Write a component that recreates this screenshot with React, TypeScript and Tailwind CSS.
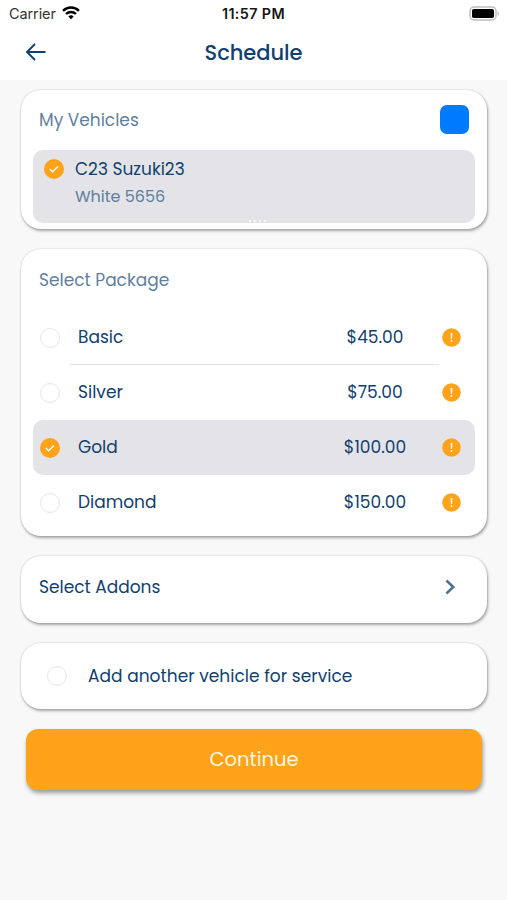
import { clsx } from "clsx";

const packages = [
  { name: "Basic", price: "$45.00" },
  { name: "Silver", price: "$75.00" },
  { name: "Gold", price: "$100.00", selected: true },
  { name: "Diamond", price: "$150.00" },
];

const cardClass =
  "rounded-[20px] bg-white shadow-[1px_2px_3px_rgba(0,0,0,0.32),0_0_2px_rgba(0,0,0,0.2)]";

function Radio({ checked = false }: { checked?: boolean }) {
  if (!checked) {
    return <span className="block size-5 shrink-0 rounded-full border-[1.5px] border-[#e4e6e8] bg-white" />;
  }
  return (
    <svg className="size-5 shrink-0" viewBox="0 0 20 20" fill="none">
      <circle cx="10" cy="10" r="10" fill="#ffa31a" />
      <path d="M5.8 10 8.6 12.7 14 7.6" stroke="white" strokeWidth="1.4" />
    </svg>
  );
}

function InfoIcon() {
  return (
    <svg className="size-[19px] shrink-0" viewBox="0 0 19 19">
      <circle cx="9.5" cy="9.5" r="9.3" fill="#ffa31a" />
      <path d="M8.6 5h1.8l-.3 6H8.9z" fill="white" />
      <circle cx="9.5" cy="13" r="0.9" fill="white" />
    </svg>
  );
}

function StatusBar() {
  return (
    <div className="grid h-7 grid-cols-3 items-center pr-[7px] pl-[9px] font-['Inter',sans-serif] text-[#151515]">
      <div className="flex items-center gap-1.5">
        <span className="text-[14.5px] leading-5 tracking-[-0.1px] text-[#333]">Carrier</span>
        <svg className="-mt-[2px] h-[14px] w-[18px]" viewBox="0 0 18 14" fill="none" stroke="black" strokeWidth="2.4">
          <path d="M1 4.8a11.5 11.5 0 0 1 16 0" />
          <path d="M4 8a7.2 7.2 0 0 1 10 0" />
          <path d="m9 13.3-2.7-2.8a4 4 0 0 1 5.4 0z" fill="black" stroke="none" />
        </svg>
      </div>
      <span className="mr-[2px] text-center text-[14.3px] leading-5 font-semibold tracking-[0.4px] whitespace-nowrap">
        11:57 PM
      </span>
      <svg className="-mt-[2px] h-[15px] w-[31px] justify-self-end" viewBox="0 0 31 15">
        <rect x="1" y="1" width="26" height="13" rx="4" fill="white" stroke="#bdbdbd" strokeWidth="1.5" />
        <rect x="3" y="3" width="22" height="9" rx="1.8" fill="black" />
        <path d="M28.5 5.2c2 .7 2 3.9 0 4.6z" fill="#bdbdbd" />
      </svg>
    </div>
  );
}

export default function App() {
  return (
    <div className="flex h-[900px] w-[507px] flex-col overflow-hidden bg-[#f8f8f8] font-['Poppins','Inter',sans-serif] text-[17px] text-[#12406d]">
      <header className="h-20 shrink-0 bg-white">
        <StatusBar />
        <div className="grid h-12 grid-cols-[40px_1fr_40px] items-center px-[25px]">
          <svg className="h-[18px] w-[22px]" viewBox="0 0 22 18" fill="none" stroke="#12406d" strokeWidth="1.9">
            <path d="M20.5 9H2M10 1 2 9l8 8" />
          </svg>
          <h1 className="pt-[2px] text-center text-[21px] leading-7 font-medium tracking-[-0.05px]">Schedule</h1>
        </div>
      </header>

      <main className="flex flex-col gap-[20px] pt-[10px] pr-5 pl-[21px]">
        <section className={clsx(cardClass, "h-[139px] px-3 pt-[15px]")}>
          <div className="flex items-center justify-between px-1.5">
            <h2 className="leading-[26px] text-[#5f7f9d]">My Vehicles</h2>
            <span className="size-[29px] rounded-[7px] bg-[#007aff]" />
          </div>
          <div className="mt-4 flex h-[73px] flex-col rounded-[10px] bg-[#e4e4e8] pt-[5px] pl-[11px]">
            <div className="flex h-7 items-center gap-[11px]">
              <Radio checked />
              <span className="pt-[2px]">C23 Suzuki23</span>
            </div>
            <span className="pl-[31px] text-base leading-7 text-[#5f7f9d]">White 5656</span>
            <span className="mt-[9px] ml-[205px] flex gap-[3px]">
              <i className="h-[2px] w-[2px] bg-[#f5f5f7]" />
              <i className="h-[2px] w-[2px] bg-[#f5f5f7]" />
              <i className="h-[2px] w-[2px] bg-[#f5f5f7]" />
              <i className="h-[2px] w-[2px] bg-[#f5f5f7]" />
            </span>
          </div>
        </section>

        <section className={clsx(cardClass, "h-[287px] px-3 pt-[18px]")}>
          <h2 className="pl-1.5 leading-[26px] text-[#5f7f9d]">Select Package</h2>
          <ul className="mt-[17px]">
            {packages.map((item) => (
              <li
                key={item.name}
                className={clsx(
                  "flex h-[55px] items-center rounded-[10px] pr-3.5 pl-[7px]",
                  item.selected && "bg-[#e4e4e8]",
                )}
              >
                <Radio checked={item.selected} />
                <div
                  className={clsx(
                    "ml-[10px] flex h-full w-[369px] items-center border-b pt-[2px] pl-2",
                    item.name === "Basic" ? "border-[#e2e2e4]" : "border-transparent",
                  )}
                >
                  <span className="flex-1">{item.name}</span>
                  <span className="mr-[14px] w-[100px] text-center">{item.price}</span>
                </div>
                <span className="ml-[3px]">
                  <InfoIcon />
                </span>
              </li>
            ))}
          </ul>
        </section>

        <section className={clsx(cardClass, "flex h-[67px] items-center justify-between pr-[31px] pb-[5px] pl-[18px]")}>
          <span className="pt-px">Select Addons</span>
          <svg className="h-4 w-[11px]" viewBox="0 0 11 16" fill="none" stroke="#4f7391" strokeWidth="2.6">
            <path d="m1.5 1.5 6.7 6.5-6.7 6.5" />
          </svg>
        </section>

        <section className={clsx(cardClass, "flex h-[66px] items-center gap-[21px] pl-[26px]")}>
          <Radio />
          <span className="pt-[2px] tracking-[0.04px]">Add another vehicle for service</span>
        </section>

        <button className="mx-[5px] h-[61px] rounded-xl bg-[#ffa31a] text-[19.5px] text-[#fff4df] shadow-[1px_3px_4px_rgba(0,0,0,0.38)]">
          Continue
        </button>
      </main>
    </div>
  );
}
